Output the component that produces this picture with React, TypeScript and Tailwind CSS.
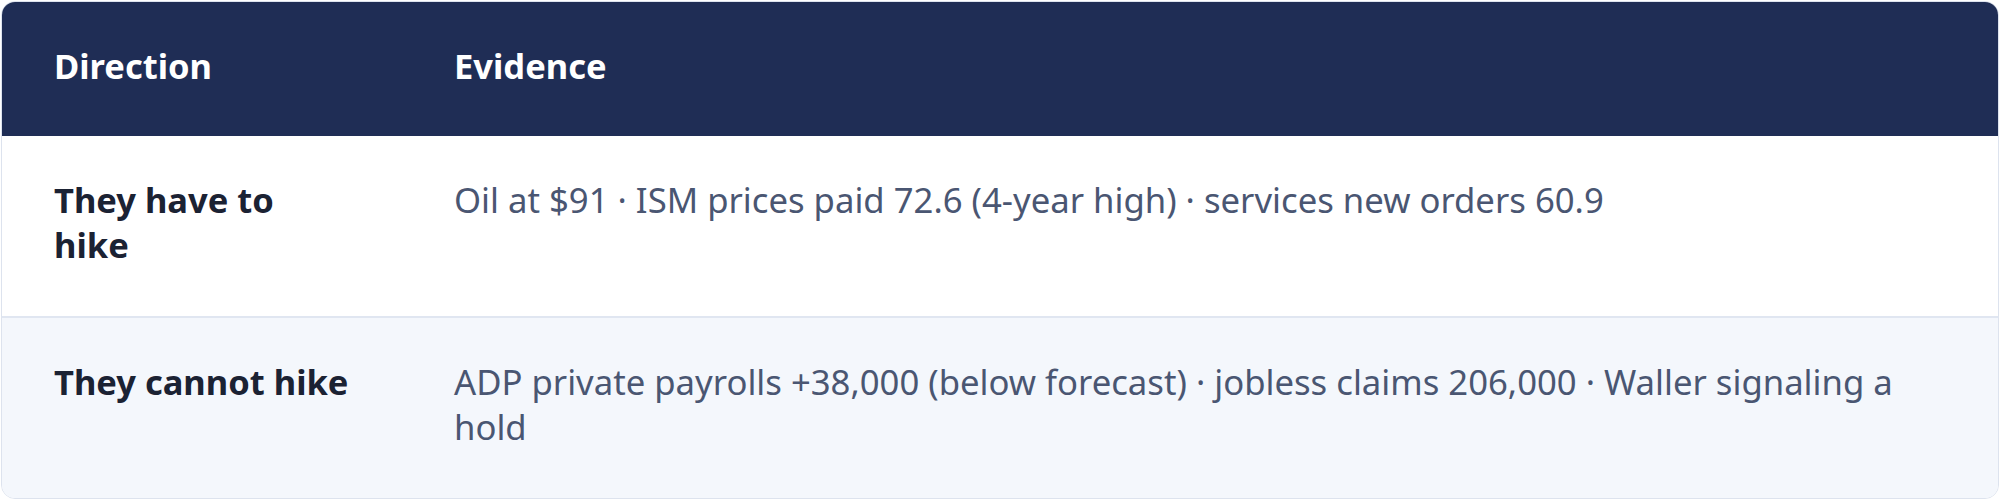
import React from "react";

const rows = [
  {
    dir: "They have to hike",
    ev: "Oil at $91 · ISM prices paid 72.6 (4-year high) · services new orders 60.9",
    bg: "bg-white",
  },
  {
    dir: "They cannot hike",
    ev: "ADP private payrolls +38,000 (below forecast) · jobless claims 206,000 · Waller signaling a hold",
    bg: "bg-[#f4f7fc]",
  },
];

export default function App() {
  return (
    <div className="p-[1px] bg-white" style={{ fontFamily: '"Noto Sans", "Noto Sans CJK KR", sans-serif' }}>
      <div className="overflow-hidden rounded-[14px] border border-[#dde3ee] text-[34.5px] leading-[45px]">
        <div className="grid grid-cols-[400px_1fr] bg-[#1f2d55] text-white font-bold">
          <div className="px-[52px] pt-[41px] pb-[48px]">Direction</div>
          <div className="px-[52px] pt-[41px] pb-[48px]">Evidence</div>
        </div>
        {rows.map((r, i) => (
          <div
            key={r.dir}
            className={`grid grid-cols-[400px_1fr] ${r.bg} ${i > 0 ? "border-t-2 border-[#e0e6f1]" : ""}`}
          >
            <div className="px-[52px] pt-[41px] pb-[49px] font-bold text-[#1b2233]">{r.dir}</div>
            <div className="px-[52px] pt-[41px] pb-[49px] text-[34.7px] text-[#4a5672]">{r.ev}</div>
          </div>
        ))}
      </div>
    </div>
  );
}
